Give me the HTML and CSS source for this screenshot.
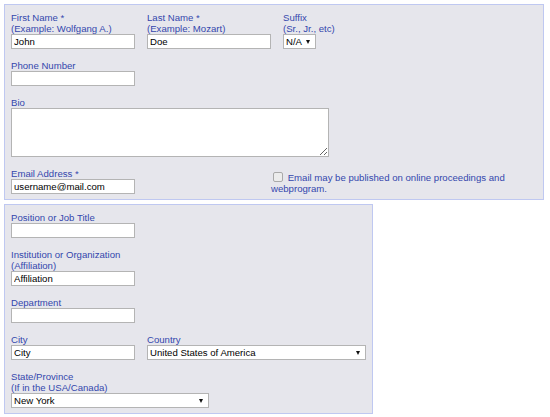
FILE: index.html
```html
<!DOCTYPE html>
<html>
<head>
  <meta name="viewport" content="width=device-width, initial-scale=1">
  <link rel="stylesheet" href="styles.css">
</head>
<body>

  <div class="page">
    <!-- Personal details -->
    <div class="panel panel-wide">
      <div class="row">
        <div class="field">
          <label>First Name *<br>(Example: Wolfgang A.)</label>
          <input class="text" type="text" value="John">
        </div>
        <div class="field">
          <label>Last Name *<br>(Example: Mozart)</label>
          <input class="text" type="text" value="Doe">
        </div>
        <div class="field">
          <label>Suffix<br>(Sr., Jr., etc)</label>
          <span class="select select-suffix"><select><option>N/A</option></select></span>
        </div>
      </div>

      <div class="row">
        <div class="field">
          <label>Phone Number</label>
          <input class="text" type="text">
        </div>
      </div>

      <div class="row">
        <div class="field">
          <label>Bio</label>
          <textarea class="bio"></textarea>
        </div>
      </div>

      <div class="row row-email">
        <div class="field">
          <label>Email Address *</label>
          <input class="text" type="text" value="username@mail.com">
        </div>
        <div class="field publish">
          <input class="check" type="checkbox"> Email may be published on online proceedings and webprogram.
        </div>
      </div>
    </div>

    <!-- Affiliation -->
    <div class="panel panel-narrow">
      <div class="row">
        <div class="field">
          <label>Position or Job Title</label>
          <input class="text" type="text">
        </div>
      </div>

      <div class="row">
        <div class="field">
          <label>Institution or Organization<br>(Affiliation)</label>
          <input class="text" type="text" value="Affiliation">
        </div>
      </div>

      <div class="row">
        <div class="field">
          <label>Department</label>
          <input class="text" type="text">
        </div>
      </div>

      <div class="row">
        <div class="field">
          <label>City</label>
          <input class="text" type="text" value="City">
        </div>
        <div class="field field-country">
          <label>Country</label>
          <span class="select select-country"><select><option>United States of America</option></select></span>
        </div>
      </div>

      <div class="row">
        <div class="field">
          <label>State/Province<br>(If in the USA/Canada)</label>
          <span class="select select-state"><select><option>New York</option></select></span>
        </div>
      </div>
    </div>
  </div>

</body>
</html>
```

FILE: styles.css
```css
/* =====================
   BASIC STYLES
   ===================== */
body {
  margin: 0;
  background: #fff;
  font-family: "Liberation Sans", Arial, sans-serif;
  font-size: 9.6px;
  color: #000;
}
* {
  box-sizing: border-box;
}

.page {
  padding: 4px;
}

/* =====================
   PANELS
   ===================== */
.panel {
  background: #e6e6ec;
  border: 1px solid #bfc8f1;
  padding: 7px 6px 5px 6px;
}
.panel-wide {
  width: 540px;
}
.panel-narrow {
  display: inline-block;
  margin-top: 4px;
}

/* =====================
   ROWS & FIELDS
   ===================== */
.row {
  display: flex;
  gap: 12px;
  margin-bottom: 11px;
}
.row:last-child {
  margin-bottom: 0;
}
.row-email {
  align-items: flex-end;
}

.field label {
  display: block;
  color: #3447ad;
  line-height: 11px;
}

/* =====================
   INPUTS
   ===================== */
.text {
  display: block;
  width: 124px;
  height: 15px;
  margin: 0;
  padding: 0 2px;
  border: 1px solid #b4b4b4;
  background: #fff;
  font-family: inherit;
  font-size: 9.6px;
  color: #000;
}

.bio {
  display: block;
  width: 318px;
  height: 49px;
  margin: 0;
  border: 1px solid #b4b4b4;
  background: #fff;
  font-family: inherit;
  font-size: 9.6px;
}

/* Select wrapper draws the small black arrow */
.select {
  display: block;
  position: relative;
}
.select select {
  appearance: none;
  -webkit-appearance: none;
  display: block;
  width: 100%;
  height: 15px;
  margin: 0;
  padding: 0 2px;
  border: 1px solid #b4b4b4;
  border-radius: 0;
  background: #fff;
  font-family: inherit;
  font-size: 9.6px;
  color: #000;
}
.select::after {
  content: "";
  position: absolute;
  top: 6px;
  right: 6px;
  border-left: 2.5px solid transparent;
  border-right: 2.5px solid transparent;
  border-top: 4px solid #111;
}
.select-suffix {
  width: 33px;
}
.select-country {
  width: 219px;
}
.select-state {
  width: 198px;
}

/* Publish checkbox sits in the third column */
.publish {
  width: 252px;
  margin-left: 124px;
  color: #3447ad;
  line-height: 11px;
}
.check {
  appearance: none;
  -webkit-appearance: none;
  width: 10px;
  height: 10px;
  margin: 0 2px 0 2px;
  vertical-align: -1px;
  border: 1px solid #a9a9a9;
  border-radius: 2px;
  background: #ececec;
}
```
